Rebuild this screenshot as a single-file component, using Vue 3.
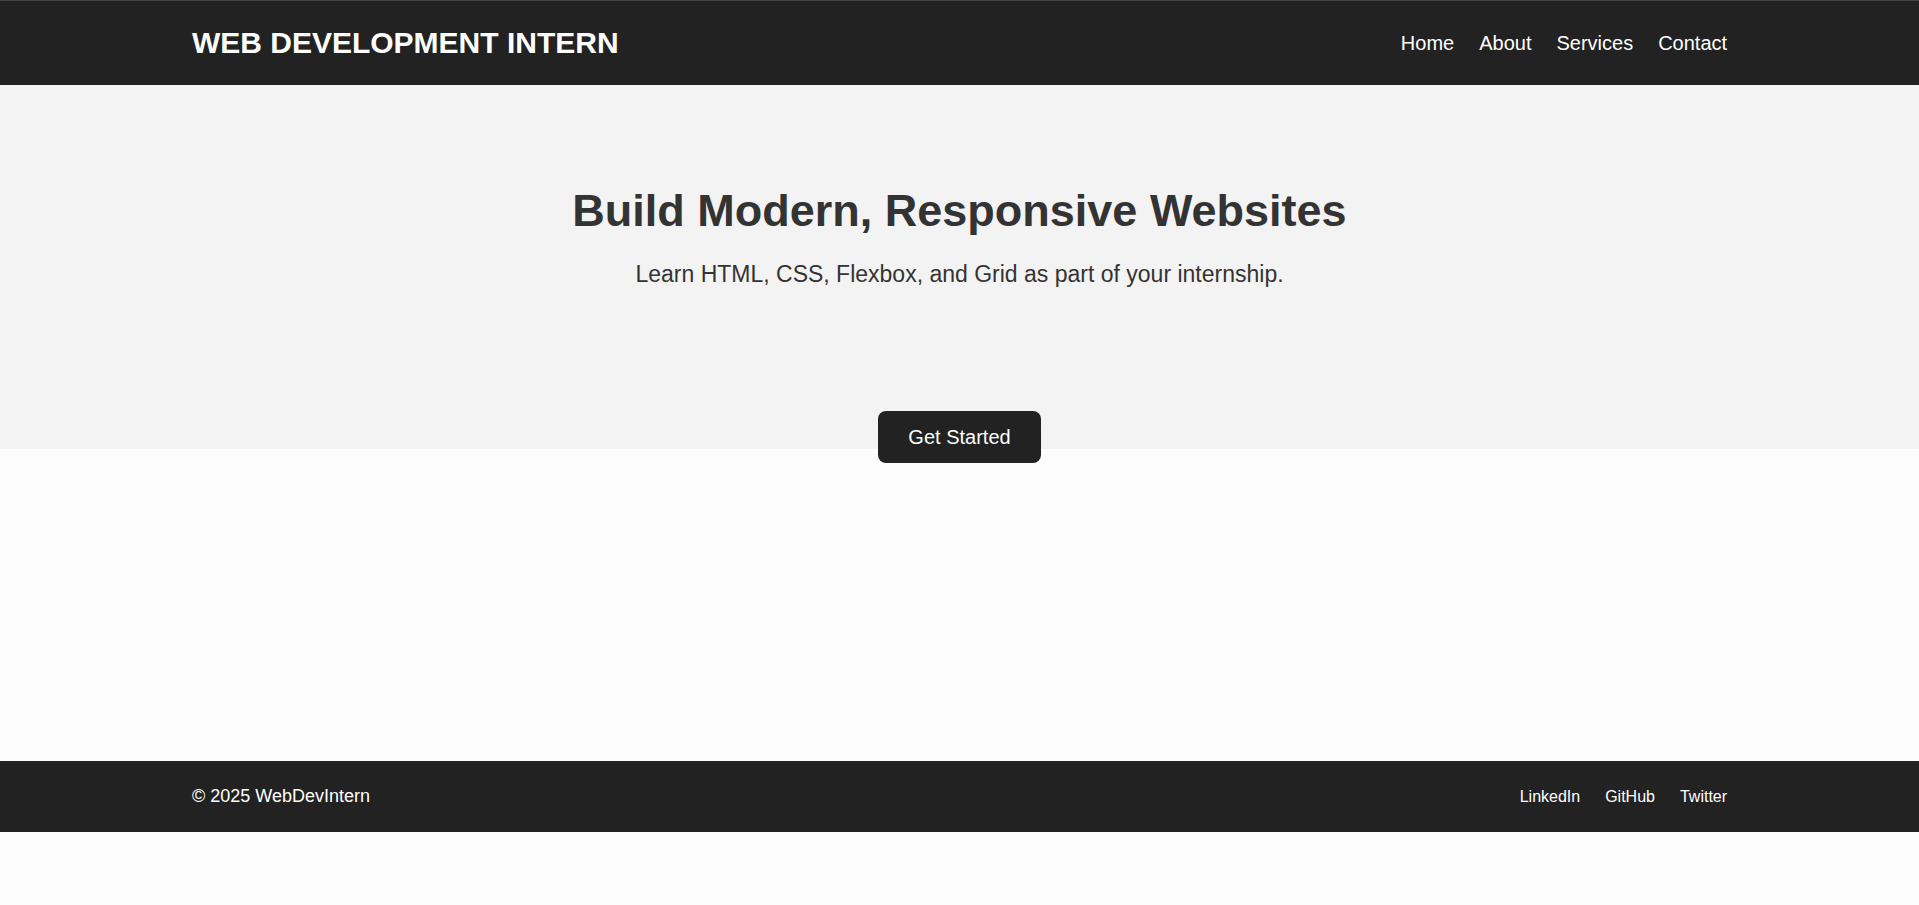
<script setup>
const navLinks = ['Home', 'About', 'Services', 'Contact']
const socialLinks = ['LinkedIn', 'GitHub', 'Twitter']
</script>

<template>
  <div class="page">
    <header class="header">
      <div class="container">
        <h1 class="logo">WEB DEVELOPMENT INTERN</h1>
        <nav class="nav">
          <a v-for="link in navLinks" :key="link" href="#">{{ link }}</a>
        </nav>
      </div>
    </header>
    <main>
      <section class="hero">
        <h2>Build Modern, Responsive Websites</h2>
        <p>Learn HTML, CSS, Flexbox, and Grid as part of your internship.</p>
      </section>
      <div class="action">
        <button type="button">Get Started</button>
      </div>
    </main>
    <footer class="footer">
      <div class="container">
        <p>© 2025 WebDevIntern</p>
        <nav class="social">
          <a v-for="link in socialLinks" :key="link" href="#">{{ link }}</a>
        </nav>
      </div>
    </footer>
  </div>
</template>

<style>
body {
  margin: 0;
  background: #fdfdfd;
}
</style>

<style scoped>
.page {
  font-family: "Liberation Sans", Arial, sans-serif;
  color: #333;
  line-height: 1.6;
}
h1, h2, p {
  margin: 0;
}
.header, .footer {
  background: #222;
  color: #fff;
}
.header {
  padding: 18px 0;
  border-top: 1px solid #444;
}
.footer {
  padding: 21px 0;
  font-size: 18px;
}
.container {
  width: 80%;
  margin: 0 auto;
  display: flex;
  justify-content: space-between;
  align-items: center;
}
.logo {
  font-size: 30px;
}
.nav, .social {
  display: flex;
  gap: 25px;
}
a {
  color: #fff;
  text-decoration: none;
}
.nav a {
  font-size: 20px;
}
.social a {
  font-size: 16px;
}
.hero {
  background: linear-gradient(to top, #f4f4f4 23px, #f3f3f3 23px);
  padding: 90px 20px 158px;
  text-align: center;
}
.hero h2 {
  font-size: 45px;
  line-height: 72px;
  margin-bottom: 10px;
}
.hero p {
  font-size: 23px;
  line-height: 34px;
}
.action {
  display: flex;
  justify-content: center;
  margin: -38px 0 298px;
}
button {
  font-family: inherit;
  font-size: 20px;
  line-height: 24px;
  padding: 14px 30px;
  color: #fff;
  background: #222;
  border: 0;
  border-radius: 8px;
}
</style>
